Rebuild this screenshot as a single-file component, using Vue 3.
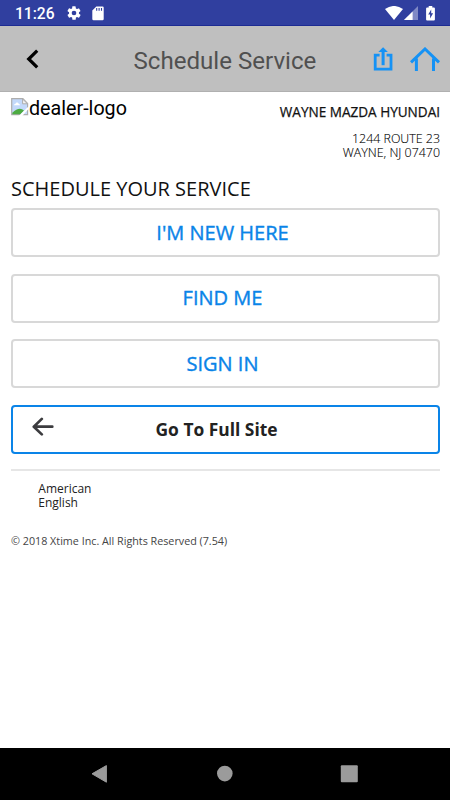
<script setup>
const actions = ["I'M NEW HERE", 'FIND ME', 'SIGN IN']
</script>

<template>
  <div class="screen">
    <header class="status">
      <span class="time">11:26</span>
      <svg class="gear" viewBox="0 0 24 24"><path fill="#fff" d="M19.4 13c.04-.3.06-.6.06-1s-.02-.7-.07-1l2.1-1.6c.2-.15.24-.4.12-.64l-2-3.46c-.12-.22-.38-.3-.6-.22l-2.5 1a7.3 7.3 0 0 0-1.7-.98l-.37-2.65A.5.5 0 0 0 14 2h-4c-.25 0-.46.18-.5.42l-.37 2.65c-.6.25-1.17.59-1.69.98l-2.49-1c-.23-.09-.49 0-.61.22l-2 3.46c-.13.22-.07.49.12.64L4.6 11a7.9 7.9 0 0 0 0 2l-2.1 1.63c-.2.15-.25.42-.13.64l2 3.46c.12.22.39.3.61.22l2.5-1c.52.4 1.08.73 1.7.98l.37 2.65c.04.24.25.42.5.42h4c.25 0 .46-.18.5-.42l.37-2.65c.6-.25 1.17-.59 1.69-.98l2.49 1c.23.09.49 0 .61-.22l2-3.46a.5.5 0 0 0-.12-.64zM12 15.5a3.5 3.5 0 1 1 0-7 3.5 3.5 0 0 1 0 7z"/></svg>
      <svg class="sd" viewBox="0 0 12 15"><path fill="#fff" d="M4.3.5h6.2q1.2 0 1.2 1.2v11.2q0 1.3-1.2 1.3H1.5q-1.2 0-1.2-1.3V4.5z"/><path stroke="#303f9f" stroke-width="1.1" d="M4.7 2v2.8M7.1 2v2.8M9.5 2v2.8"/></svg>
      <div class="radio">
        <svg class="wifi" viewBox="0 0 18 14"><path fill="#fff" d="M0 3.1Q9-3.2 18 3.1L9 14z"/></svg>
        <svg class="cell" viewBox="0 0 14 14"><path fill="#8089c5" d="M14 0v14H0z"/><path fill="#fff" d="M8.6 5.4V14H0z"/></svg>
        <svg class="battery" viewBox="0 0 9 15"><path fill="#fff" d="M2.7 1.4V0h3.6v1.4h1.6q1 0 1 1v11q0 1.1-1 1.1H1.1q-1 0-1-1.1v-11q0-1 1-1z"/><path fill="#303f9f" d="M5.2 3.5 2.2 8.6h1.9v3.8l3-5.2H5.2z"/></svg>
      </div>
    </header>

    <nav class="toolbar">
      <svg class="back" viewBox="0 0 14 20"><path fill="none" stroke="#000" stroke-width="3.2" d="M12.2 1.6 3.7 10l8.5 8.4"/></svg>
      <h1>Schedule Service</h1>
      <svg class="share" viewBox="0 0 20 25"><path fill="none" stroke="#1592f5" stroke-width="2.8" d="M6.6 8.1H2.2v14.1h15.8V8.1h-4.4"/><path stroke="#1592f5" stroke-width="3" d="M10.1 3v15.2"/><path fill="#1592f5" d="M10.1.2 14.9 5H5.3z"/></svg>
      <svg class="home" viewBox="0 0 30 25"><path fill="none" stroke="#1592f5" stroke-width="3" d="M1 15.3 15 2l14 13.3M6.4 11.5v12.4M23.5 11.5v12.4"/></svg>
    </nav>

    <main>
      <section class="dealer">
        <div class="logo">
          <svg viewBox="0 0 18 18"><path fill="#c3d9fb" stroke="#adadad" stroke-width="1.2" d="M.7.7h11.2l4.7 4.8v11.2H.7z"/><path fill="#fff" d="M3 7.3q0-1.6 1.5-1.6.5-1.7 2-1.2 1.5.5 1.2 1.6 1.4.1 1.3 1.2z"/><path fill="#4dab42" d="M1.3 16.2v-1.5Q8.2 8.3 13 12.5l-3.6 3.7z"/><path fill="#fff" d="M17.7 8.2v2.5L11.2 18H7.7z"/><path fill="#f4f4f4" stroke="#adadad" d="M11.6 1v4.8h4.8z"/></svg>
          <span>dealer-logo</span>
        </div>
        <div class="contact">
          <strong>WAYNE MAZDA HYUNDAI</strong>
          <address>1244 ROUTE 23<br>WAYNE, NJ 07470</address>
        </div>
      </section>

      <h2><span>SCHEDULE YOUR SERVICE</span></h2>
      <div class="actions">
        <button v-for="label in actions" :key="label" class="action"><span>{{ label }}</span></button>
        <button class="full">
          <svg viewBox="0 0 22 20"><path fill="none" stroke="#3c3c3f" stroke-width="2.7" stroke-linecap="round" stroke-linejoin="round" d="M20.3 9.7H2M9.8 1.9 1.8 9.7l8 7.7"/></svg>
          <span>Go To Full Site</span>
        </button>
      </div>
      <hr>
      <p class="lang">American<br>English</p>
      <footer><span>© 2018 Xtime Inc. All Rights Reserved (7.54)</span></footer>
    </main>

    <div class="system">
      <svg viewBox="0 0 450 52"><path fill="#9b9b9b" stroke="#9b9b9b" stroke-linejoin="round" d="M92 25.8 106.4 17.6v16.6z"/><circle cx="224.8" cy="25.6" r="7.8" fill="#9b9b9b"/><rect x="340.8" y="17.2" width="17" height="17" rx="1" fill="#9b9b9b"/></svg>
    </div>
  </div>
</template>

<style>
body { margin: 0; background: #fff; }
</style>

<style scoped>
* { box-sizing: border-box; }
svg { display: block; flex: none; }
.screen { width: 450px; height: 800px; display: flex; flex-direction: column; background: #fff; overflow: hidden; font-family: "Open Sans", sans-serif; color: #1c1c1c; }
.status { height: 26px; flex: none; background: #303f9f; border-bottom: 1px solid #1c2b93; display: flex; align-items: flex-start; padding: 0 15px 0 15px; }
.time { width: 51px; font: 500 15.6px/19px Roboto, sans-serif; color: #fff; padding-top: 5px; }
.gear { width: 16px; height: 16px; margin-top: 5px; }
.sd { width: 12px; height: 15px; margin: 6px 0 0 10px; }
.radio { display: flex; margin-left: auto; align-items: flex-start; padding-top: 6px; }
.wifi { width: 18px; height: 14px; }
.cell { width: 14px; height: 14px; margin-left: 1px; }
.battery { width: 9px; height: 15px; margin-left: 8px; }
.toolbar { height: 66px; flex: none; background: #bfbfbf; border-bottom: 1px solid #b0b0b0; display: flex; align-items: flex-start; padding-left: 25px; }
.back { width: 14px; height: 20px; margin-top: 23px; }
h1 { margin: 21px 0 0 94.5px; width: 183.5px; white-space: nowrap; font: 400 24.1px/29px Roboto, sans-serif; color: #505050; }
.share { width: 20px; height: 25px; margin: 21px 0 0 56px; }
.home { width: 30px; height: 25px; margin: 21px 0 0 17px; }
main { flex: 1; padding: 6px 10px 0 11px; }
.dealer { height: 80px; display: flex; justify-content: space-between; }
.logo { display: flex; align-items: flex-start; font: 400 19.7px/22px Roboto, sans-serif; color: #000; }
.logo svg { width: 18px; height: 18px; }
.contact { text-align: right; padding-top: 5px; }
.contact strong { display: block; font-size: 13.55px; font-weight: 400; -webkit-text-stroke: .25px; line-height: 18px; color: #111; white-space: nowrap; }
address { margin-top: 11px; font-style: normal; font-weight: 300; font-size: 12.4px; line-height: 14px; color: #000; -webkit-text-stroke: .1px; }
h2 { margin: 0; height: 30px; font-weight: 400; font-size: 20px; line-height: 22px; color: #111; white-space: nowrap; }
.actions { display: flex; flex-direction: column; gap: 16.6px; }
button { margin: 0; padding: 0; height: 49px; width: 100%; border-radius: 4px; background: #fff; font-family: inherit; display: flex; align-items: center; }
.action { border: 2px solid #d8d8d8; justify-content: center; color: #0a84e8; font-size: 20px; font-weight: 400; -webkit-text-stroke: .4px; padding: 0 6px 1px 0; }
.full { border: 2px solid #0a84e8; color: #222; font-size: 17.4px; font-weight: 700; padding-left: 19px; }
.full svg { width: 22px; height: 20px; margin: -4px 101.5px 0 0; }
.full span { margin-top: -1px; }
hr { margin: 15px 0 0; border: 0; height: 2px; background: #e6e6e6; }
.lang { margin: 11px 0 0 27.3px; font-size: 12px; line-height: 14px; color: #222; }
footer { margin-top: 24px; font-size: 10.75px; line-height: 14px; color: #444; }
.system { height: 52px; flex: none; background: #000; }
.system svg { width: 450px; height: 52px; }
</style>
